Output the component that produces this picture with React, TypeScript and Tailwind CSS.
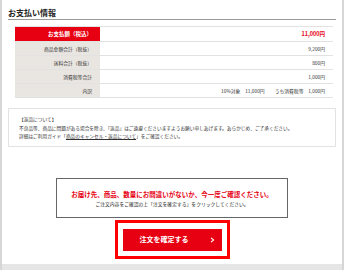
import React from 'react';

const jp = { fontFamily: '"Noto Sans CJK JP", "Noto Sans", sans-serif' };

interface Row {
  label: string;
  value: React.ReactNode;
}

const rows: Row[] = [
  { label: '商品金額合計（税抜）', value: '9,200円' },
  { label: '送料合計（税抜）', value: '800円' },
  { label: '消費税等合計', value: '1,000円' },
  {
    label: '内訳',
    value: (
      <span className="flex gap-[10px]">
        <span>10%対象　11,000円</span>
        <span>うち消費税等　1,000円</span>
      </span>
    ),
  },
];

const App: React.FC = () => {
  return (
    <div style={jp} className="w-[344px] h-[270px] bg-white border-x-2 border-[#d6d6d6] flex flex-col text-[#333]">
      <div className="flex-1 px-[6px] pt-[9px]">
        <h2 className="text-[8px] leading-[8px] font-bold text-[#222] pb-[2px] border-b border-[#9a9a9a]">お支払い情報</h2>

        <div className="mt-[6px] ml-[7px] mr-[3px] border-t border-[#e2e2e2]">
          <div className="flex h-[15px] border-b border-[#e2e2e2]">
            <div className="w-[85px] bg-[#e60012] text-white font-bold text-[5.5px] flex items-center justify-end pr-[8px]">
              お支払額（税込）
            </div>
            <div className="flex-1 flex items-center justify-end pr-[8px] text-[#e60012] font-bold text-[5.5px]">11,000円</div>
          </div>
          {rows.map((r) => (
            <div key={r.label} className="flex h-[14px] border-b border-[#e2e2e2]">
              <div className="w-[85px] bg-[#e9e5e1] text-[4.8px] flex items-center justify-end pr-[8px]">{r.label}</div>
              <div className="flex-1 flex items-center justify-end pr-[8px] text-[4.8px]">{r.value}</div>
            </div>
          ))}
        </div>

        <div className="mt-[10px] border border-[#e3e3e3] h-[39px] pl-[10px] pt-[6px] text-[4.7px] leading-[8.5px]">
          <p>【返品について】</p>
          <p>不良品等、商品に問題がある場合を除き、「返品」はご遠慮くださいますようお願い申しあげます。あらかじめ、ご了承ください。</p>
          <p>
            詳細はご利用ガイド「<span className="underline">商品のキャンセル・返品について</span>」をご確認ください。
          </p>
        </div>

        <div className="mt-[31px] mx-auto w-[232px] h-[40px] border-[1.5px] border-[#666] flex flex-col items-center justify-center gap-[3px]">
          <p className="text-[6.5px] leading-[8px] font-bold text-[#e60012]">お届け先、商品、数量にお間違いがないか、今一度ご確認ください。</p>
          <p className="text-[4.8px] leading-[6px] text-[#222]">ご注文内容をご確認の上「注文を確定する」をクリックしてください。</p>
        </div>

        <div className="mt-[2px] mx-auto w-[115px] h-[39px] border-[3px] border-[#ff0000] flex items-center justify-center">
          <button className="relative w-[99px] h-[22px] bg-[#e60012] text-white text-[7px] font-bold flex items-center justify-center">
            <span className="-ml-[16px]">注文を確定する</span>
            <svg className="absolute right-[7px] top-1/2 -translate-y-1/2" width="5" height="6" viewBox="0 0 5 6" fill="none">
              <path d="M1 0.8 L3.6 3 L1 5.2" stroke="white" strokeWidth="1.1" />
            </svg>
          </button>
        </div>
      </div>
      <div className="h-[6px] bg-[#e6e6e6]" />
    </div>
  );
};

export default App;
